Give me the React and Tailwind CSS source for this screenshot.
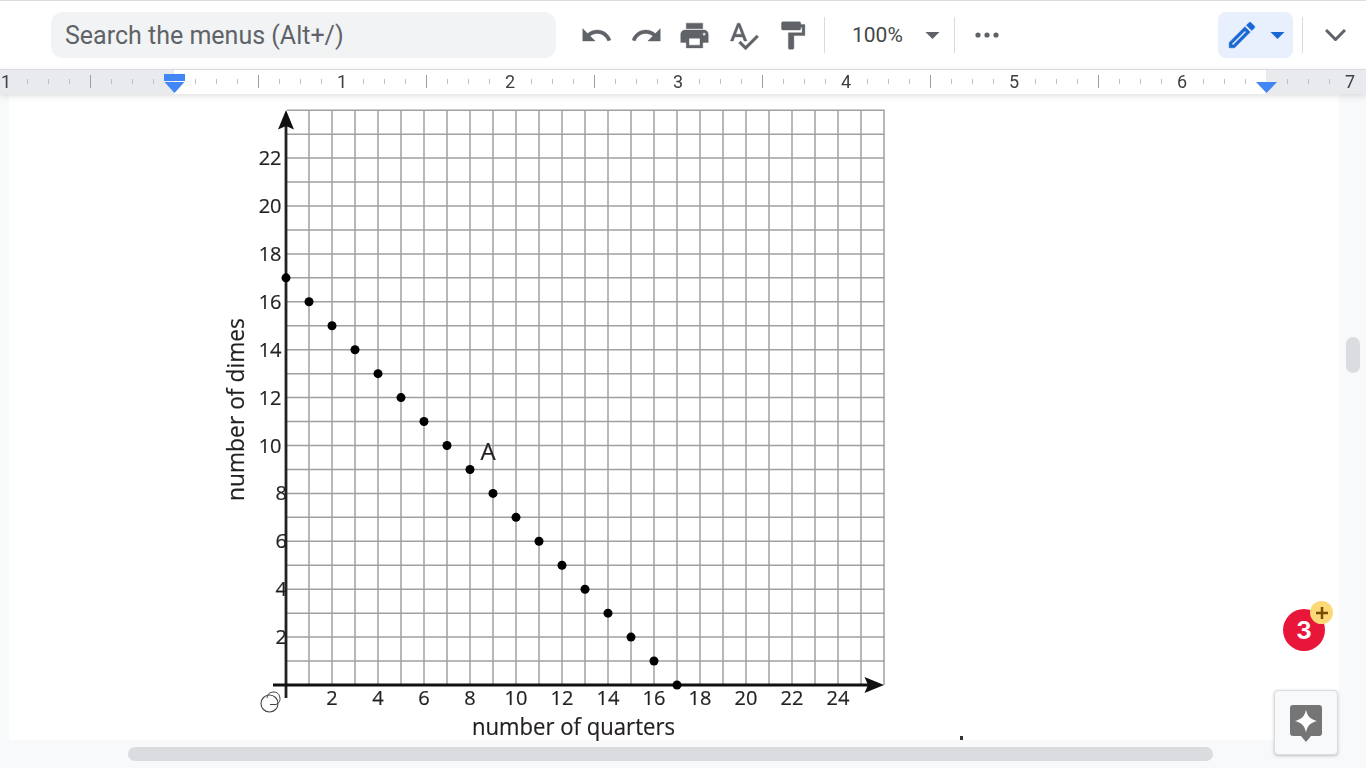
import React from "react";

const Mi = ({ d, className = "w-[33px] h-[33px] fill-[#5f6368] stroke-[#5f6368] stroke-[0.3] shrink-0" }) => (
  <svg viewBox="0 0 24 24" className={className}><path d={d} /></svg>
);

const Sep = ({ className }) => <div className={"w-px h-[36px] bg-[#dadce0] shrink-0 " + className} />;

const Caret = ({ className }) => (
  <svg viewBox="0 0 14 7" className={"w-[15px] h-[7px] shrink-0 " + className}><path d="M0 0h14L7 7z" /></svg>
);

function Toolbar() {
  return (
    <div className="h-[69px] shrink-0 bg-white border-t border-[#dadce0] flex items-center pl-[51px]">
      <div className="w-[505px] h-[46px] rounded-xl bg-[#f1f3f4] flex items-center pl-[14px] pt-[2px] text-[25px] text-[#5f6368] font-['Roboto',sans-serif] shrink-0">
        Search the menus (Alt+/)
      </div>
      <div className="flex items-center gap-4 ml-[24px]">
        <Mi d="M12.5 8c-2.65 0-5.05.99-6.9 2.6L2 7v9h9l-3.62-3.62c1.39-1.16 3.16-1.88 5.12-1.88 3.54 0 6.55 2.31 7.6 5.5l2.37-.78C21.08 11.03 17.15 8 12.5 8z" />
        <Mi
          className="w-[33px] h-[33px] ml-px -mr-px fill-[#5f6368] stroke-[#5f6368] stroke-[0.3] shrink-0"
          d="M18.4 10.6C16.55 8.99 14.15 8 11.5 8c-4.65 0-8.58 3.03-9.96 7.22L3.9 16c1.05-3.19 4.05-5.5 7.6-5.5 1.95 0 3.73.72 5.12 1.88L13 16h9V7l-3.6 3.6z"
        />
        <Mi d="M19 8H5c-1.66 0-3 1.34-3 3v6h4v4h12v-4h4v-6c0-1.66-1.34-3-3-3zm-3 11H8v-5h8v5zm3-7c-.55 0-1-.45-1-1s.45-1 1-1 1 .45 1 1-.45 1-1 1zm-1-9H6v4h12V3z" />
        <Mi d="M12.45 16h2.09L9.43 3H7.57L2.46 16h2.09l1.12-3h5.64l1.14 3zm-6.02-5L8.5 5.48 10.57 11H6.43zm15.16.59l-8.09 8.09L9.83 16l-1.41 1.41 5.09 5.09L23 13l-1.41-1.41z" />
        <Mi d="M18 4V3c0-.55-.45-1-1-1H5c-.55 0-1 .45-1 1v4c0 .55.45 1 1 1h12c.55 0 1-.45 1-1V6h1v4H9v11c0 .55.45 1 1 1h2c.55 0 1-.45 1-1v-9h8V4h-3z" />
      </div>
      <Sep className="ml-[15px]" />
      <span className="ml-[27px] w-[51px] text-[21px] text-[#444746] font-['Roboto',sans-serif] leading-none">100%</span>
      <Caret className="ml-[22px] fill-[#5f6368]" />
      <Sep className="ml-[14px]" />
      <svg viewBox="0 0 24 6" className="ml-[20px] w-[24px] h-[6px] fill-[#5f6368] shrink-0">
        <circle cx="3" cy="3" r="2.6" />
        <circle cx="12" cy="3" r="2.6" />
        <circle cx="21" cy="3" r="2.6" />
      </svg>
      <div className="ml-auto w-[75px] h-[46px] rounded-lg bg-[#e8f0fe] flex items-center pl-[7px] shrink-0">
        <Mi
          className="w-[34px] h-[34px] fill-[#1967d2] stroke-[#1967d2] stroke-[0.4] shrink-0"
          d="M14.06 9.02l.92.92L5.92 19H5v-.92l9.06-9.06M17.66 3c-.25 0-.51.1-.7.29l-1.83 1.83 3.75 3.75 1.83-1.83c.39-.39.39-1.02 0-1.41l-2.34-2.34c-.2-.2-.45-.29-.71-.29zm-3.6 3.19L3 17.25V21h3.75L17.81 9.94l-3.75-3.75z"
        />
        <Caret className="ml-[11px] fill-[#1967d2]" />
      </div>
      <Sep className="ml-[9px]" />
      <svg viewBox="0 0 21 12" className="ml-[22px] mr-[20px] w-[21px] h-[12px] shrink-0 fill-none stroke-[#5f6368] stroke-[3]">
        <path d="M1 1l9.5 9.5L20 1" />
      </svg>
    </div>
  );
}

function Ruler() {
  const ticks = [];
  for (let k = -7; k <= 55; k++) {
    if (((k % 8) + 8) % 8 === 0) continue;
    const x = 174 + 21 * k;
    const major = ((k % 4) + 4) % 4 === 0;
    if (x === 1266) continue;
    ticks.push(
      <line
        key={k}
        x1={x + 0.5}
        x2={x + 0.5}
        y1={major ? 5 : 9}
        y2={major ? 18 : 14}
        stroke={major ? "#9aa0a6" : "#bdc1c6"}
        strokeWidth="1"
      />
    );
  }
  const labels = [[6, "1"], [342, "1"], [510, "2"], [678, "3"], [846, "4"], [1014, "5"], [1182, "6"], [1350, "7"]];
  return (
    <div className="h-[25px] shrink-0 relative z-10 flex border-t border-[#dadce0] bg-white shadow-[0_2px_6px_rgba(60,64,67,0.16)]">
      <div className="w-[174px] bg-[#e8eaed]" />
      <div className="flex-1 bg-white" />
      <div className="w-[100px] bg-[#e8eaed]" />
      <svg width="1366" height="24" viewBox="0 0 1366 24" className="absolute left-0 top-0 blur-[0.2px]">
        {ticks}
        {labels.map(([x, t], i) => (
          <text key={i} x={x} y="18" textAnchor="middle" fontSize="18" fill="#3c4043" className="font-['Roboto',sans-serif]">
            {t}
          </text>
        ))}
        <rect x="164" y="4" width="21" height="7" fill="#4285f4" />
        <path d="M164.500 12h20L174.500 23z" fill="#4285f4" />
        <path d="M1256 12h21l-10.500 11z" fill="#4285f4" />
      </svg>
    </div>
  );
}

function Chart() {
  const X = (k) => 286 + 23 * k;
  const Y = (k) => 685 - 23.95 * k;
  const vs = Array.from({ length: 26 }, (_, i) => i + 1);
  const hs = Array.from({ length: 24 }, (_, i) => i + 1);
  const evenY = [2, 4, 6, 8, 10, 12, 14, 16, 18, 20, 22];
  const dots = Array.from({ length: 18 }, (_, k) => k);
  return (
    <svg
      viewBox="220 95 680 645"
      className="ml-[211px] mt-px w-[680px] h-[645px] block overflow-visible blur-[0.35px] font-['Open_Sans',sans-serif]"
    >
      {vs.map((k) => (
        <line key={k} x1={X(k)} x2={X(k)} y1="110" y2="685" stroke="#a0a0a0" strokeWidth="1.5" />
      ))}
      {hs.map((k) => (
        <line key={k} x1="287" x2="884.500" y1={Y(k)} y2={Y(k)} stroke="#a0a0a0" strokeWidth="1.5" />
      ))}
      <line x1="286" x2="286" y1="120" y2="698" stroke="#222" strokeWidth="2.8" />
      <line x1="273" x2="872" y1="685" y2="685" stroke="#111" strokeWidth="2.8" />
      <path d="M286 110l8 19.500L286 126l-8 3.500z" fill="#111" />
      <path d="M884 685l-19.500 8L868 685l-3.500-8z" fill="#111" />
      {dots.map((k) => (
        <circle key={k} cx={X(k)} cy={Y(17 - k)} r="4.500" fill="#000" />
      ))}
      <g fill="#231f20" stroke="#231f20" strokeWidth="0.2" fontSize="20">
        {evenY.map((k) => (
          <text key={k} x={k < 10 ? 287 : 281.500} y={Y(k) + 7} textAnchor="end">
            {k}
          </text>
        ))}
        {[2, 4, 6, 8, 10, 12, 14, 16, 18, 20, 22, 24].map((k) => (
          <text key={k} x={X(k)} y="705" textAnchor="middle">
            {k}
          </text>
        ))}
        <text x="488" y="460" fontSize="24" textAnchor="middle">A</text>
        <text x="472" y="734.500" fontSize="23.500" textLength="203" lengthAdjust="spacingAndGlyphs">number of quarters</text>
        <text transform="translate(243.500 501) rotate(-90)" fontSize="23.500" textLength="183" lengthAdjust="spacingAndGlyphs">number of dimes</text>
      </g>
      <circle cx="269.500" cy="703.500" r="8.500" fill="none" stroke="#444" strokeWidth="1.1" />
      <path d="M267 698a6.500 6.500 0 1 1 9 6.500h-6" fill="none" stroke="#444" strokeWidth="1" />
    </svg>
  );
}

export default function App() {
  return (
    <div className="w-[1366px] h-[768px] overflow-hidden relative flex flex-col bg-[#f8f9fa] font-['Roboto',sans-serif]">
      <Toolbar />
      <Ruler />
      <div className="flex h-[646px] shrink-0 pl-[9px]">
        <div className="w-[1330px] h-full bg-white">
          <Chart />
        </div>
        <div className="ml-[7px] mt-[243px] w-[14px] h-[36px] rounded-full bg-[#dadce0]" />
      </div>
      <div className="pl-[128px] pt-[7px]">
        <div className="w-[1085px] h-[14px] rounded-full bg-[#dadce0]" />
      </div>

      <div className="absolute left-[960px] top-[736px] w-[3px] h-[4px] bg-[#333]" />

      <div className="absolute left-[1283px] top-[609px] w-[42px] h-[42px] pt-px rounded-full bg-[#e8173a] flex items-center justify-center text-white text-[24px] font-bold font-['Inter',sans-serif]">
        3
      </div>
      <div className="absolute left-[1310px] top-[601px] w-[23px] h-[23px] rounded-full bg-[#fbd977] flex items-center justify-center">
        <svg viewBox="0 0 14 14" className="w-[14px] h-[14px] stroke-[#7a4b00] stroke-[2.5]">
          <path d="M7 1v12M1 7h12" />
        </svg>
      </div>

      <div className="absolute left-[1274px] top-[690px] w-[64px] h-[65px] rounded bg-[#f8f9fa] border border-[#dadce0] shadow-[0_1px_3px_rgba(60,64,67,0.3)] flex items-center justify-center">
        <svg viewBox="0 0 32 38" className="w-[32px] h-[38px] mt-[3px]">
          <path d="M3 0h26a3 3 0 0 1 3 3v25a3 3 0 0 1-3 3h-8l-5 6-5-6H3a3 3 0 0 1-3-3V3a3 3 0 0 1 3-3z" fill="#757575" />
          <path d="M16 4.500c1.200 6.500 4 9.500 11 11.500-7 2-9.800 5-11 11.500-1.200-6.500-4-9.500-11-11.500 7-2 9.800-5 11-11.500z" fill="#fff" />
        </svg>
      </div>
    </div>
  );
}
